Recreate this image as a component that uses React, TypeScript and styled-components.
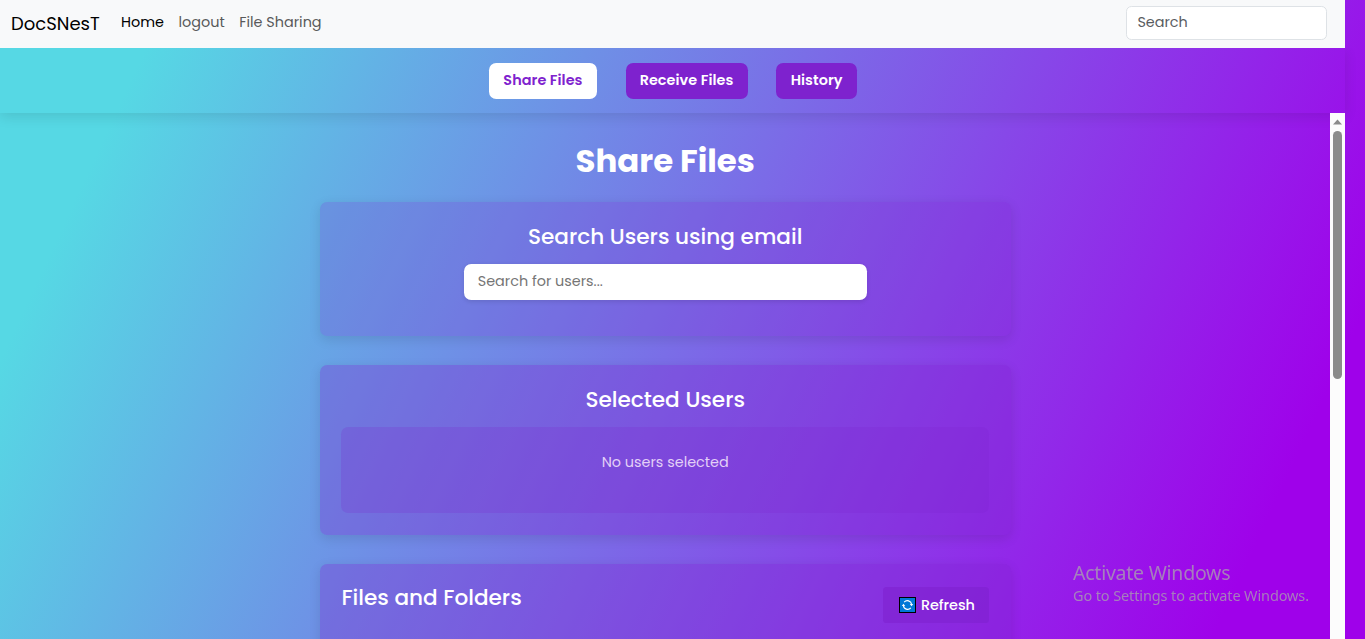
import React from "react";
import styled, { createGlobalStyle } from "styled-components";

const GlobalStyle = createGlobalStyle`
  *, *::before, *::after { box-sizing: border-box; }
  html, body { margin: 0; height: 100%; overflow: hidden; }
  body {
    font-family: Poppins, Inter, "Liberation Sans", sans-serif;
    font-size: 14.4px;
    line-height: 21.6px;
    color: #fff;
    background: #9f01ea;
  }
  h1, h2, p { margin: 0; }
`;

const Page = styled.div`
  width: 100%;
  height: 639px;
  padding-right: 20px;
  display: flex;
  flex-direction: column;
  overflow: hidden;
  background: linear-gradient(115deg, #56d8e4 10%, #9f01ea 90%) 0 0 / 100% 672px no-repeat;
`;

const Navbar = styled.nav`
  flex: none;
  height: 48px;
  padding: 0 18px 0 11px;
  display: flex;
  align-items: center;
  background: #f8f9fa;
`;

const Brand = styled.a`
  width: 110px;
  font-size: 18px;
  color: #000;
`;

const NavLinks = styled.div`
  flex: 1;
  display: flex;
  gap: 14.6px;
  padding-bottom: 2px;
`;

const NavLink = styled.a<{ $active?: boolean }>`
  color: ${(p) => (p.$active ? "#000" : "#595a5a")};
`;

const NavSearch = styled.input`
  width: 201px;
  height: 34px;
  margin-bottom: 2px;
  padding: 0 10.4px 1px;
  font: inherit;
  border: 1px solid #dee2e6;
  border-radius: 5.4px;
  background: #fff;
  outline: none;
  &::placeholder { color: #595c5f; opacity: 1; }
`;

const TabBar = styled.div`
  flex: none;
  height: 65px;
  padding: 15px 0 0 1px;
  display: flex;
  justify-content: center;
  align-items: flex-start;
  gap: 28.6px;
  box-shadow: 0 3.6px 12px rgba(0, 0, 0, 0.1);
  clip-path: inset(0 -20px -20px 0);
`;

const Tab = styled.button<{ $active?: boolean; $width: number }>`
  width: ${(p) => p.$width}px;
  height: 36px;
  padding: 0;
  border: 0;
  border-radius: 7.2px;
  font: inherit;
  font-weight: 600;
  letter-spacing: 0.06px;
  white-space: nowrap;
  color: ${(p) => (p.$active ? "#7e22ce" : "#fff")};
  background: ${(p) => (p.$active ? "#fff" : "#7e22ce")};
`;

const Body = styled.div`
  flex: 1;
  min-height: 0;
  display: flex;
`;

const Content = styled.main`
  flex: 1;
  display: flex;
  flex-direction: column;
  align-items: center;
  gap: 29.2px;
  padding: 28px 0 0 0.4px;
  overflow: hidden;
`;

const Title = styled.h1`
  height: 32px;
  line-height: 40px;
  font-size: 32.4px;
  font-weight: 700;
`;

const Card = styled.section<{ $height: number; $alpha: number }>`
  flex: none;
  width: 690.8px;
  height: ${(p) => p.$height}px;
  padding: 21.6px;
  display: flex;
  flex-direction: column;
  align-items: center;
  border-radius: 7.2px;
  background: rgba(126, 34, 206, ${(p) => p.$alpha});
  box-shadow: 0 3.6px 12px rgba(0, 0, 0, 0.1);
`;

const CardTitle = styled.h2`
  font-size: 21.6px;
  line-height: 26px;
  font-weight: 500;
`;

const UserSearch = styled.input`
  width: 403px;
  height: 36px;
  margin-top: 14.2px;
  padding: 0 14px;
  border: 0;
  border-radius: 7.2px;
  font: inherit;
  background: #fff;
  outline: none;
  box-shadow: 0 1.8px 4.5px rgba(0, 0, 0, 0.1);
  &::placeholder { color: #757575; opacity: 1; }
`;

const EmptyBox = styled.div`
  width: 100%;
  height: 86.4px;
  margin-top: 14.2px;
  padding-top: 25px;
  text-align: center;
  color: #e3d0f7;
  border-radius: 7.2px;
  background: rgba(126, 34, 206, 0.2);
`;

const CardHeader = styled.div`
  width: 100%;
  display: flex;
  justify-content: space-between;
  align-items: flex-start;
`;

const RefreshButton = styled.button`
  width: 106px;
  height: 36px;
  margin-top: 1.4px;
  padding: 0 0 0 16px;
  display: flex;
  align-items: center;
  gap: 5px;
  border: 0;
  border-radius: 3.6px;
  font: inherit;
  font-weight: 500;
  color: #fff;
  background: rgba(126, 34, 206, 0.6);

  span { padding-top: 2px; letter-spacing: -0.05px; }
`;

const Scrollbar = styled.div`
  position: relative;
  flex: none;
  width: 15px;
  padding-top: 6px;
  display: flex;
  flex-direction: column;
  align-items: center;
  gap: 6px;
  background: #fcfcfc;
`;

const Thumb = styled.div`
  width: 9px;
  height: 248px;
  border-radius: 5px;
  background: #8b8b8b;
`;

const Watermark = styled.div`
  position: fixed;
  left: 1073px;
  top: 560px;
  font-family: "Noto Sans", "Open Sans", sans-serif;
  font-weight: 400;
  color: rgba(170, 170, 170, 0.72);
  white-space: nowrap;
`;

const WatermarkTitle = styled.p`
  font-size: 19.5px;
  line-height: 26px;
  letter-spacing: -0.24px;
`;

const WatermarkText = styled.p`
  font-size: 14.5px;
  line-height: 19px;
  letter-spacing: -0.12px;
`;

const RefreshIcon = () => (
  <svg width="17" height="16" viewBox="0 0 17 16">
    <rect x="0.5" y="0.5" width="16" height="15" fill="#0078d7" stroke="#000" />
    <g fill="none" stroke="#fff" strokeWidth="1.1">
      <path d="M5.2 5.2A4.2 4.2 0 0 1 12.6 7.4" />
      <path d="M11.8 10.8A4.2 4.2 0 0 1 4.4 8.6" />
    </g>
    <path d="M10.8 7h3.4l-1.7 2.2zM2.8 9h3.4L4.5 6.8z" fill="#fff" />
  </svg>
);

export default function App() {
  return (
    <>
      <GlobalStyle />
      <Page>
        <Navbar>
          <Brand>DocSNesT</Brand>
          <NavLinks>
            <NavLink $active>Home</NavLink>
            <NavLink>logout</NavLink>
            <NavLink>File Sharing</NavLink>
          </NavLinks>
          <NavSearch placeholder="Search" />
        </Navbar>
        <TabBar>
          <Tab $active $width={108}>Share Files</Tab>
          <Tab $width={122}>Receive Files</Tab>
          <Tab $width={81}>History</Tab>
        </TabBar>
        <Body>
          <Content>
            <Title>Share Files</Title>
            <Card $height={133.8} $alpha={0.2}>
              <CardTitle>Search Users using email</CardTitle>
              <UserSearch placeholder="Search for users..." />
            </Card>
            <Card $height={169.4} $alpha={0.3}>
              <CardTitle>Selected Users</CardTitle>
              <EmptyBox>No users selected</EmptyBox>
            </Card>
            <Card $height={300} $alpha={0.3}>
              <CardHeader>
                <CardTitle>Files and Folders</CardTitle>
                <RefreshButton>
                  <RefreshIcon />
                  <span>Refresh</span>
                </RefreshButton>
              </CardHeader>
            </Card>
          </Content>
          <Scrollbar>
            <svg width="9" height="6" viewBox="0 0 9 6">
              <path d="M0 5.5 4.5 0.5 9 5.5z" fill="#8b8b8b" />
            </svg>
            <Thumb />
          </Scrollbar>
        </Body>
      </Page>
      <Watermark>
        <WatermarkTitle>Activate Windows</WatermarkTitle>
        <WatermarkText>Go to Settings to activate Windows.</WatermarkText>
      </Watermark>
    </>
  );
}
